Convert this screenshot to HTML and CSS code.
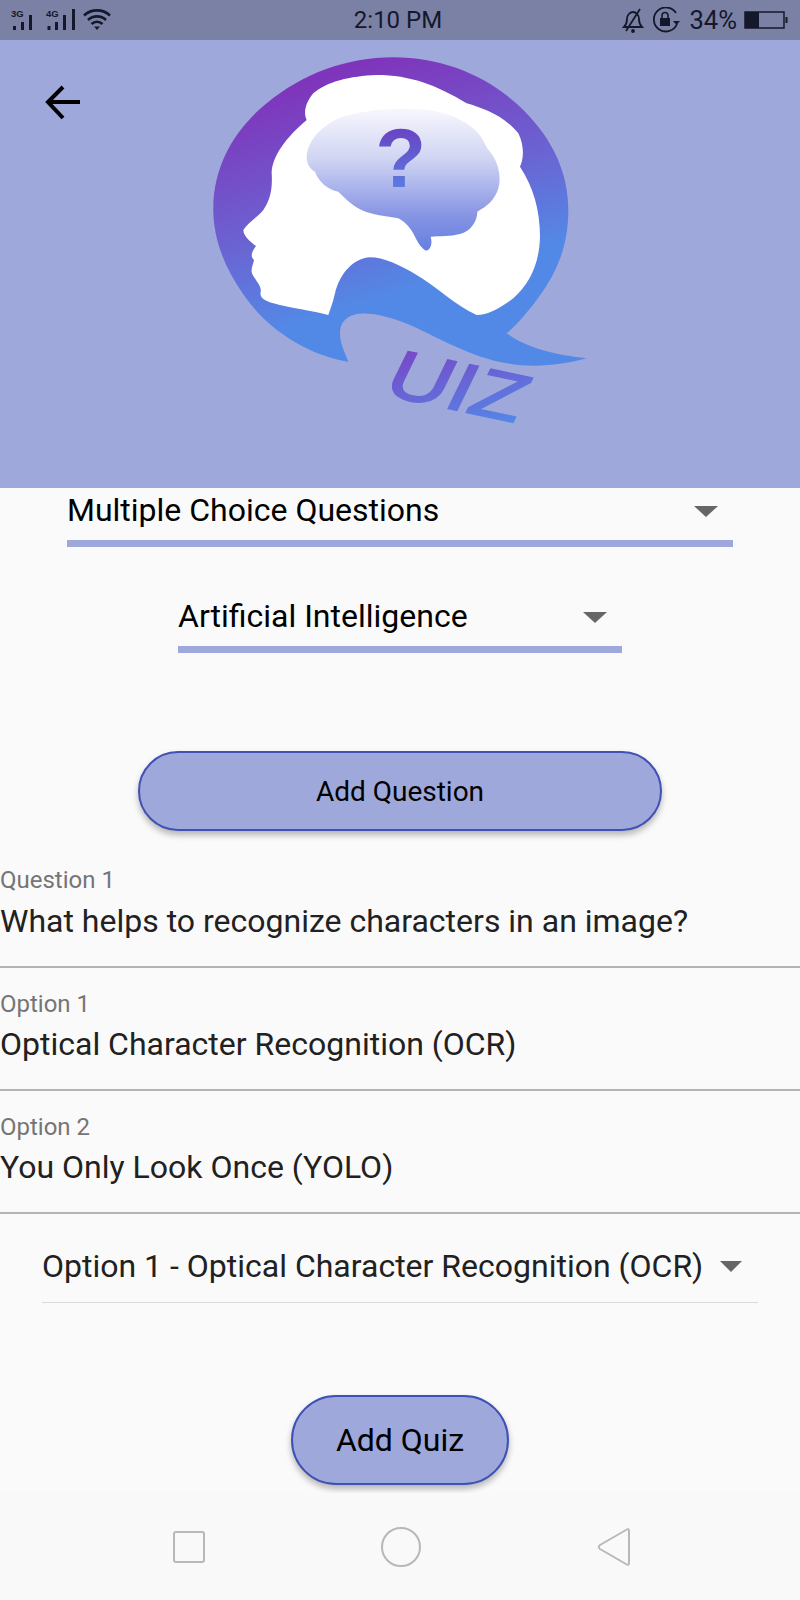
FILE: index.html
```html
<!DOCTYPE html>
<html lang="en">
<head>
<meta charset="utf-8">
<title>Quiz</title>
<link rel="stylesheet" href="styles.css">
</head>
<body>
<div class="screen">
  <div class="status">
    <svg class="status-left" width="120" height="40" viewBox="0 0 120 40">
      <text x="11" y="17" class="net">3G</text>
      <g class="bars"><rect x="13" y="26" width="3" height="4"/><rect x="21" y="22" width="3" height="8"/><rect x="29" y="15" width="3" height="15"/></g>
      <text x="46" y="17" class="net">4G</text>
      <g class="bars"><rect x="47.500" y="26" width="3" height="4"/><rect x="55" y="22" width="3" height="8"/><rect x="63" y="15" width="3" height="15"/><rect x="72" y="9" width="3" height="21"/></g>
      <g fill="none" stroke="#15182a" stroke-width="2.600">
        <path d="M84 15.500a19 19 0 0 1 26 0"/><path d="M88 20a13 13 0 0 1 18 0"/><path d="M91.500 24a8 8 0 0 1 11 0"/>
      </g>
      <path d="M94 26.500h6l-3 3.500z" fill="#15182a"/>
    </svg>
    <span class="time">2:10 PM</span>
    <div class="status-right">
      <svg width="24" height="26" viewBox="0 0 24 26" fill="none" stroke="#15182a" stroke-width="1.800">
        <path d="M3 20c2-2 3-4 3-8 0-4 3-7 6-7s6 3 6 7c0 4 1 6 3 8z"/><path d="M19 2L5 24"/><circle cx="12" cy="24" r="1" fill="#15182a"/>
      </svg>
      <svg width="30" height="26" viewBox="0 0 30 26">
        <path d="M25 17a12 12 0 1 1-1-11" fill="none" stroke="#15182a" stroke-width="1.800"/>
        <path d="M21 14h7l-3.500 4z" fill="#15182a"/>
        <path d="M8 11h10v8H8z" fill="#15182a"/>
        <path d="M10 11V8.500a3 3 0 0 1 6 0V11" fill="none" stroke="#15182a" stroke-width="1.600"/>
      </svg>
      <span class="pct">34%</span>
      <svg width="44" height="20" viewBox="0 0 44 20">
        <rect x="1" y="2" width="39" height="16" fill="none" stroke="#15182a" stroke-width="1.500"/>
        <rect x="1" y="2" width="14" height="16" fill="#15182a"/>
        <rect x="41.500" y="7" width="2" height="6" fill="#15182a"/>
      </svg>
    </div>
  </div>

  <header class="hero">
    <svg class="back" width="40" height="38" viewBox="0 0 40 38" fill="none" stroke="#000" stroke-width="4">
      <path d="M2 17H35"/><path d="M18 2L3 17L18 33"/>
    </svg>
    <svg class="logo" width="420" height="400" viewBox="0 0 1260 1200">
      <defs>
        <linearGradient id="ring" x1="0.200" y1="0.100" x2="0.500" y2="0.900">
          <stop offset="0" stop-color="#7f35bb"/><stop offset="0.500" stop-color="#6b63d2"/><stop offset="0.850" stop-color="#5389e6"/>
        </linearGradient>
        <linearGradient id="brain" x1="0" y1="0" x2="0" y2="1">
          <stop offset="0" stop-color="#f7f7fd"/><stop offset="0.350" stop-color="#d0d5f3"/><stop offset="0.750" stop-color="#8794e4"/><stop offset="1" stop-color="#6480e0"/>
        </linearGradient>
        <linearGradient id="word" x1="0" y1="0" x2="1" y2="1">
          <stop offset="0" stop-color="#7d3fc2"/><stop offset="1" stop-color="#4f90ec"/>
        </linearGradient>
        <linearGradient id="mark" x1="0" y1="0" x2="0" y2="1">
          <stop offset="0.200" stop-color="#6a45c5"/><stop offset="0.800" stop-color="#5a7be0"/>
        </linearGradient>
      </defs>
      <path fill="url(#ring)" d="M475 965C380 950 250 890 165 770C100 680 68 590 70 500C72 380 130 270 230 190C340 100 470 52 610 52C760 52 900 110 1000 210C1090 300 1135 400 1135 510C1135 620 1100 700 1040 780C1010 820 980 855 950 880C1010 925 1100 945 1190 955C1120 975 1030 985 950 970C840 950 760 900 660 855C600 830 540 815 500 822C465 830 450 850 450 880C450 910 465 940 475 965Z"/>
      <path fill="#fff" d="M415 825C370 812 300 805 250 790C225 782 208 775 212 755C215 740 200 725 190 708C178 690 190 675 192 660C180 650 185 635 198 618C185 608 160 590 160 570C175 545 205 530 220 510C240 480 248 450 245 400C245 350 290 290 350 240C340 220 345 190 370 160C410 125 480 108 560 105C660 105 740 135 830 190C880 205 940 225 985 280C1005 320 1000 360 990 380C1030 440 1050 510 1050 590C1048 670 1020 730 970 775C930 805 895 825 860 825C800 800 740 740 680 705C630 675 580 652 540 652C490 655 450 700 435 760C428 790 420 810 415 825Z"/>
      <path fill="url(#brain)" d="M350 350C352 310 385 265 440 238C500 212 600 202 690 208C760 212 830 240 865 280C885 305 885 320 900 335C925 365 935 410 925 445C915 480 890 500 862 515C862 545 840 575 810 582C780 590 750 588 722 590C728 610 722 630 708 632C695 625 685 610 675 590C665 570 650 548 625 535C590 528 545 525 515 510C490 498 470 480 445 455C415 450 385 425 375 395C358 385 350 370 350 350Z"/>
      <text x="632" y="442" class="qmark">?</text>
      <text transform="translate(572 1062) rotate(12) skewX(-14) scale(1.250 1)" class="uiz">UIZ</text>
    </svg>
  </header>

  <main class="content">
    <div class="select select-wide"><span>Multiple Choice Questions</span><i class="caret"></i></div>
    <div class="select select-mid"><span>Artificial Intelligence</span><i class="caret"></i></div>
    <button class="btn btn-question">Add Question</button>

    <div class="field"><label>Question 1</label><div class="value">What helps to recognize characters in an image?</div></div>
    <div class="field"><label>Option 1</label><div class="value">Optical Character Recognition (OCR)</div></div>
    <div class="field"><label>Option 2</label><div class="value">You Only Look Once (YOLO)</div></div>

    <div class="answer"><span>Option 1 - Optical Character Recognition (OCR)</span><i class="caret"></i></div>
    <button class="btn btn-quiz">Add Quiz</button>
  </main>

  <nav class="navbar">
    <svg width="34" height="34" viewBox="0 0 34 34" fill="none" stroke="#b8b8b8" stroke-width="2"><rect x="2" y="2" width="30" height="30" rx="2"/></svg>
    <svg width="42" height="42" viewBox="0 0 42 42" fill="none" stroke="#b8b8b8" stroke-width="2"><circle cx="21" cy="21" r="19"/></svg>
    <svg width="36" height="40" viewBox="0 0 36 40" fill="none" stroke="#b8b8b8" stroke-width="2" stroke-linejoin="round"><path d="M32 4C32 2 31 1.500 29 3L3 18C1.500 19 1.500 21 3 22L29 37C31 38.500 32 38 32 36Z"/></svg>
  </nav>
</div>
</body>
</html>
```
FILE: styles.css
```css
* { box-sizing: border-box; }
html, body { margin: 0; padding: 0; }
body { background: #fafafa; font-family: Roboto, "Liberation Sans", sans-serif; color: #000; }
.screen { width: 800px; height: 1600px; overflow: hidden; display: flex; flex-direction: column; }

.status { height: 40px; background: #7a81a5; display: flex; align-items: center; position: relative; color: #15182a; }
.status-left { flex: none; }
.time { position: absolute; left: 0; right: 4px; text-align: center; font-size: 24px; line-height: 40px; }
.status-right { margin-left: auto; margin-right: 12px; display: flex; align-items: center; gap: 7px; }
.pct { font-size: 25.600px; }
.net { font: 700 9.500px "Liberation Sans", sans-serif; fill: #15182a; }
.bars { fill: #15182a; }

.hero { height: 448px; background: #9fa8da; display: flex; justify-content: center; position: relative; flex: none; }
.back { position: absolute; left: 45px; top: 45px; }
.logo { display: block; }
.qmark { font: 700 250px "Liberation Sans", sans-serif; fill: url(#mark); text-anchor: middle; }
.uiz { font: 400 205px "Liberation Sans", sans-serif; fill: url(#word); stroke: url(#word); stroke-width: 6px; }

.content { display: flex; flex-direction: column; align-items: center; flex: none; height: 1005px; }
.select { display: flex; align-items: center; justify-content: space-between; height: 59px; border-bottom: 7px solid #9fa8da; font-size: 32px; padding-bottom: 8px; }
.select-wide { width: 666px; padding-right: 15px; }
.select-mid { width: 444px; margin-top: 47px; padding-right: 15px; }
.caret { width: 0; height: 0; border-left: 11px solid transparent; border-right: 11px solid transparent; border-top: 11px solid #666; flex: none; }
.select .caret { border-left-width: 12px; border-right-width: 12px; margin-top: 2px; }

.btn { display: block; background: #9fa8da; border: 2px solid #3f51b5; color: #000; font-family: Roboto, "Liberation Sans", sans-serif; box-shadow: 0 4px 6px rgba(0,0,0,.28); padding: 0; }
.btn-question { width: 524px; height: 80px; border-radius: 40px; margin-top: 98px; font-size: 28px; }
.btn-quiz { width: 218px; height: 90px; border-radius: 45px; margin-top: 92px; font-size: 32px; }

.field { width: 800px; height: 123px; border-bottom: 2px solid #b4b4b4; padding: 23px 0 0 0; }
.btn-question + .field { margin-top: 15px; height: 122px; padding-top: 21px; }
.field label { display: block; font-size: 24px; line-height: 26px; color: #757575; }
.value { font-size: 32px; line-height: 42px; color: #212121; margin-top: 6px; }
.btn-question + .field .value { margin-top: 7px; }

.answer { width: 716px; height: 89px; border-bottom: 1px solid #d9d9d9; display: flex; align-items: center; justify-content: space-between; padding: 16px 16px 0 0; font-size: 32px; color: #212121; }
.navbar { flex: none; height: 107px; background: #f9f9f9; display: flex; align-items: center; }
.navbar svg:nth-child(1) { margin-left: 172px; }
.navbar svg:nth-child(2) { margin-left: 174px; }
.navbar svg:nth-child(3) { margin-left: 175px; }
```
